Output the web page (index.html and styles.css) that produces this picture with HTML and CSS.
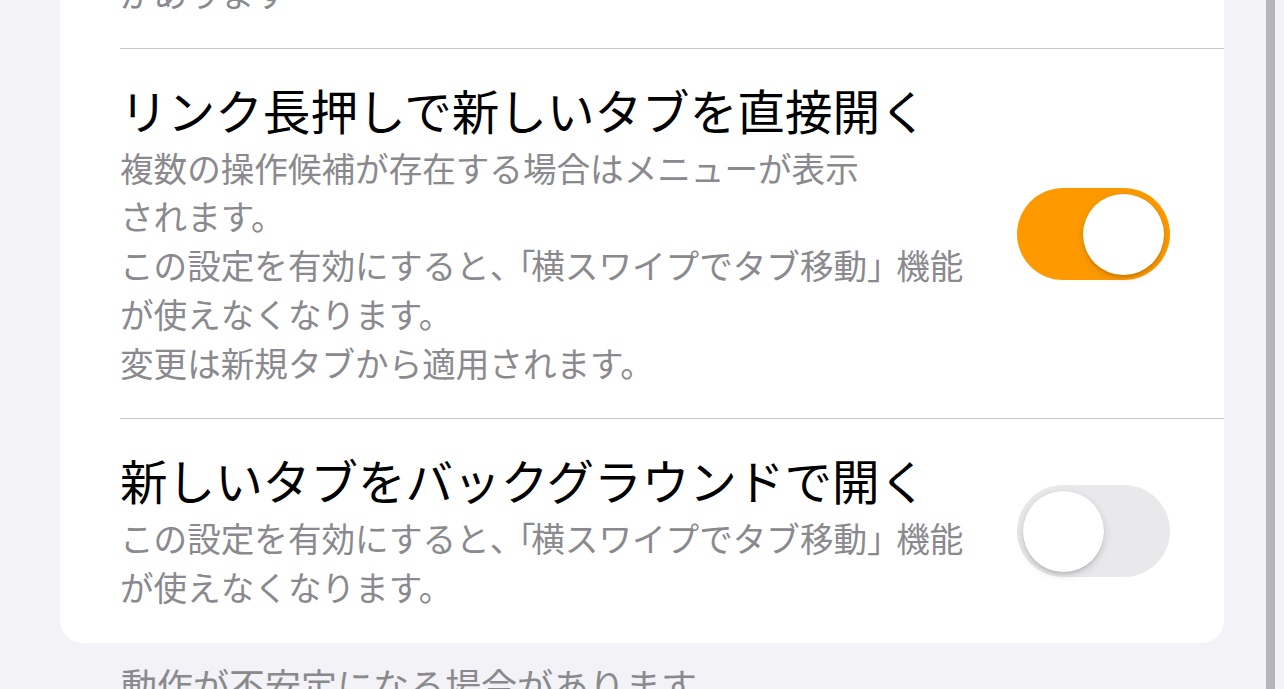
FILE: index.html
```html
<!DOCTYPE html>
<html lang="ja">
<head>
<meta charset="utf-8">
<link rel="stylesheet" href="styles.css">
</head>
<body>
<div class="screen">
  <div class="content">
    <div class="card">
      <div class="row row-partial">
        <div class="texts">
          <div class="desc">があります</div>
        </div>
      </div>
      <div class="row">
        <div class="texts">
          <div class="title">リンク長押しで新しいタブを直接開く</div>
          <div class="desc">複数の操作候補が存在する場合はメニューが表示<br>されます。<br>この設定を有効にすると<span class="punct">、「</span>横スワイプでタブ移動<span class="punct">」</span>機能<br>が使えなくなります。<br>変更は新規タブから適用されます。</div>
        </div>
        <div class="toggle on"><div class="knob"></div></div>
      </div>
      <div class="row">
        <div class="texts">
          <div class="title">新しいタブをバックグラウンドで開く</div>
          <div class="desc">この設定を有効にすると<span class="punct">、「</span>横スワイプでタブ移動<span class="punct">」</span>機能<br>が使えなくなります。</div>
        </div>
        <div class="toggle"><div class="knob"></div></div>
      </div>
    </div>
    <div class="footer">動作が不安定になる場合があります</div>
  </div>
  <div class="scrollbar"></div>
</div>
</body>
</html>
```

FILE: styles.css
```css
* { box-sizing: border-box; }
html, body {
  margin: 0;
  padding: 0;
  height: 100%;
  overflow: hidden;
  background: #f2f2f7;
}
body {
  font-family: "Noto Sans CJK JP", "Noto Sans", sans-serif;
}
.screen {
  display: flex;
  height: 689px;
  width: 1284px;
}
.content {
  width: 1224px;
  padding-left: 60px;
  margin-top: -31px;
  flex: none;
}
.card {
  background: #ffffff;
  border-radius: 0 0 22px 22px;
}
.row {
  display: flex;
  align-items: center;
  margin-left: 60px;
  padding: 32px 54px 31px 0;
  border-top: 1px solid #c8c7cc;
}
.row-partial {
  border-top: none;
  padding: 0 54px 30px 0;
}
.texts {
  flex: 1;
  min-width: 0;
}
.title {
  font-size: 47.6px;
  line-height: 57px;
  color: #000000;
  margin-bottom: 6px;
  white-space: nowrap;
}
.desc {
  font-size: 33.6px;
  line-height: 48.7px;
  color: #8a8a8e;
  white-space: nowrap;
}
.punct {
  letter-spacing: -4.4px;
}
.toggle {
  flex: none;
  width: 153px;
  height: 92px;
  border-radius: 46px;
  background: #e9e9eb;
  position: relative;
}
.toggle.on {
  background: #fe9a00;
}
.knob {
  position: absolute;
  top: 6px;
  left: 6px;
  width: 81px;
  height: 81px;
  border-radius: 50%;
  background: #ffffff;
  box-shadow: 0 3px 8px rgba(0,0,0,0.15), 0 3px 1px rgba(0,0,0,0.06), 0 0 0 0.5px rgba(0,0,0,0.04);
}
.toggle.on .knob {
  left: 66px;
}
.footer {
  margin-top: 17px;
  padding-left: 61px;
  font-size: 36px;
  line-height: 48px;
  color: #8a8a8e;
  white-space: nowrap;
}
.scrollbar {
  margin-left: 42px;
  width: 9px;
  height: 689px;
  background: #b4b4ba;
  flex: none;
}
```
